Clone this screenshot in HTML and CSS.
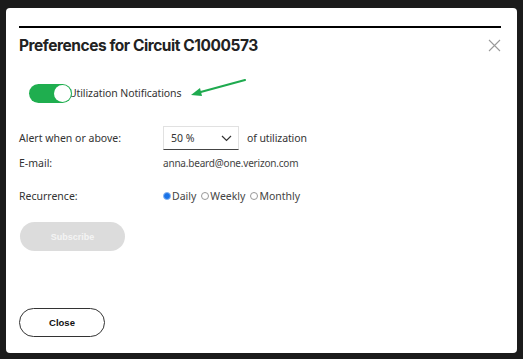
FILE: index.html
```html
<!DOCTYPE html>
<html>
<head>
<meta charset="utf-8">
<link rel="stylesheet" href="styles.css">
</head>
<body>
<div class="modal">
  <div class="rule"></div>
  <div class="header">
    <h1 class="title">Preferences for Circuit C1000573</h1>
    <svg class="close-x" width="13" height="13" viewBox="0 0 13 13"><path d="M1 1L12 12M12 1L1 12" stroke="#9a9a9a" stroke-width="1.1" fill="none"/></svg>
  </div>
  <div class="toggle-row">
    <span class="toggle"><span class="knob"></span></span>
    <span class="toggle-label">Utilization Notifications</span>
    <svg class="arrow" width="60" height="22" viewBox="0 0 60 22"><path d="M56 2L8 15" stroke="#1faa4f" stroke-width="2.2" fill="none" stroke-linecap="round"/><path d="M2 17L11 10L13 18Z" fill="#1faa4f"/></svg>
  </div>
  <div class="form">
    <div class="row row-alert">
      <span class="label">Alert when or above:</span>
      <span class="select"><span>50 %</span><svg width="11" height="7" viewBox="0 0 11 7"><path d="M1 1L5.5 5.5L10 1" stroke="#333" stroke-width="1.2" fill="none"/></svg></span>
      <span class="suffix">of utilization</span>
    </div>
    <div class="row row-email">
      <span class="label">E-mail:</span>
      <span class="value">anna.beard@one.verizon.com</span>
    </div>
    <div class="row row-rec">
      <span class="label">Recurrence:</span>
      <span class="radios">
        <span class="radio"><span class="dot on"></span>Daily</span>
        <span class="radio"><span class="dot"></span>Weekly</span>
        <span class="radio"><span class="dot"></span>Monthly</span>
      </span>
    </div>
  </div>
  <button class="btn-sub">Subscribe</button>
  <button class="btn-close">Close</button>
</div>
</body>
</html>
```

FILE: styles.css
```css
* { box-sizing: border-box; }
html, body { margin: 0; padding: 0; }
body {
  width: 523px;
  height: 359px;
  background: #1b1b1b;
  overflow: hidden;
  font-family: "Noto Sans", "Open Sans", sans-serif;
}
.modal {
  margin: 8px 0 0 6px;
  width: 511px;
  height: 345px;
  background: #fff;
  border-radius: 4px;
  padding: 18px 16px 0 13px;
  display: flex;
  flex-direction: column;
  align-items: flex-start;
}
.rule {
  width: 482px;
  height: 2px;
  background: #000;
}
.header {
  width: 482px;
  display: flex;
  justify-content: space-between;
  align-items: center;
  margin-top: 8px;
}
.title {
  margin: 0;
  font-family: "Inter", "Liberation Sans", sans-serif;
  font-weight: 700;
  font-size: 15.5px;
  letter-spacing: -0.45px;
  color: #222;
  line-height: 20px;
}
.close-x { margin-top: -2px; }
.toggle-row {
  display: flex;
  align-items: center;
  margin-top: 27px;
  margin-left: 10px;
  height: 20px;
}
.toggle {
  position: relative;
  width: 43px;
  height: 19px;
  border-radius: 10px;
  background: #1fae4f;
}
.knob {
  position: absolute;
  right: 1px;
  top: 1px;
  width: 17px;
  height: 17px;
  border-radius: 50%;
  background: #fff;
}
.toggle-label {
  margin-left: -3px;
  font-size: 10.5px;
  letter-spacing: -0.1px;
  color: #333;
}
.arrow { margin-left: 8px; margin-top: -8px; }
.form {
  margin-top: 23px;
  display: flex;
  flex-direction: column;
  font-size: 10.5px;
  color: #333;
}
.row { display: flex; align-items: center; }
.label { width: 144px; }
.row-alert { height: 24px; }
.select {
  width: 76px;
  height: 24px;
  border: 1px solid #e1e1e1;
  border-bottom: 1px solid #444;
  display: flex;
  align-items: center;
  justify-content: space-between;
  padding: 0 6px 0 7px;
  font-size: 10.5px;
}
.suffix { margin-left: 8px; font-size: 10.5px; letter-spacing: -0.1px; }
.row-email { margin-top: 6px; }
.value { color: #444; font-size: 10px; letter-spacing: -0.2px; }
.row-rec { margin-top: 19px; }
.radios { display: flex; gap: 5px; }
.radio { display: flex; align-items: center; color: #444; }
.dot {
  width: 8px;
  height: 8px;
  border-radius: 50%;
  border: 1px solid #999;
  margin-right: 1px;
}
.dot.on {
  background: #1a73e8;
  border-color: #8ab6f0;
}
.btn-sub {
  margin-top: 19px;
  margin-left: 1px;
  width: 105px;
  height: 29px;
  border: none;
  border-radius: 15px;
  background: #dcdcdc;
  color: #f4f4f4;
  font-family: "Liberation Sans", sans-serif;
  font-weight: 700;
  font-size: 9px;
}
.btn-close {
  margin-top: 57px;
  width: 86px;
  height: 29px;
  border: 1px solid #333;
  border-radius: 15px;
  background: #fff;
  color: #111;
  font-family: "Liberation Sans", sans-serif;
  font-weight: 700;
  font-size: 9.5px;
}
```
